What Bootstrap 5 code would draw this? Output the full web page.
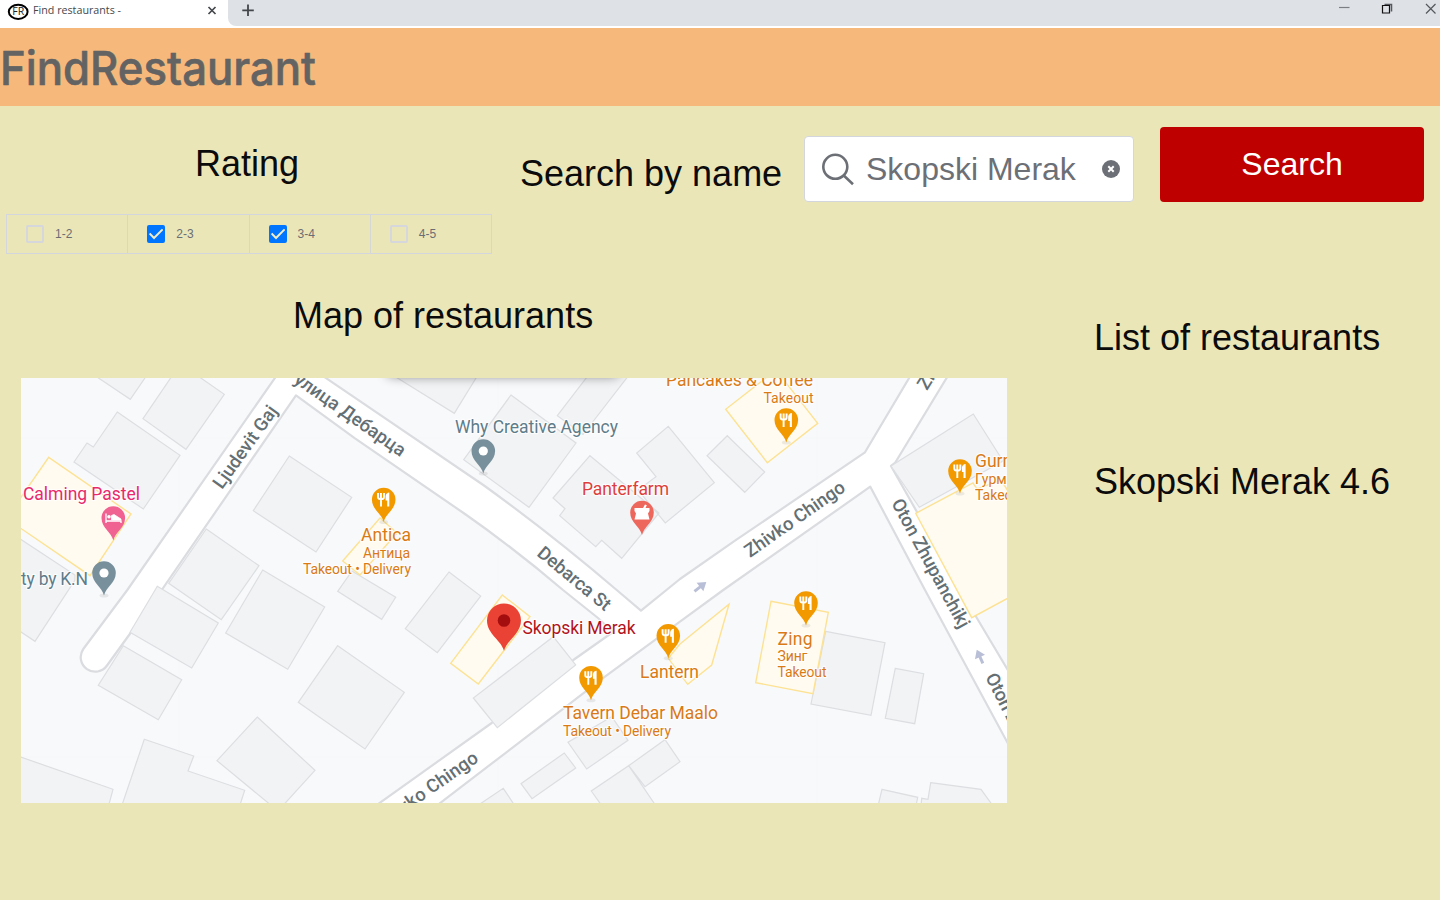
<!DOCTYPE html>
<html lang="en">
<head>
<meta charset="utf-8">
<meta name="viewport" content="width=device-width, initial-scale=1">
<title>Find restaurants</title>
<link href="https://cdn.jsdelivr.net/npm/bootstrap@5.3.0/dist/css/bootstrap.min.css" rel="stylesheet">
<style>
  body { background: #ebe6b8; font-family: "Liberation Sans", Arial, sans-serif; color: #0b0b0b; height: 900px; overflow: hidden; }
  header svg { overflow: visible; }
  .tabstrip { height: 28px; background: #fff; }
  .tab-open { width: 228px; height: 26px; padding-left: 7px; }
  .tab-rest { height: 26px; background: #dee1e6; border-bottom-left-radius: 8px; }
  .brandbar { height: 78px; background: #f7b97b; }
  .heading { font-size: 36px; line-height: 36px; font-weight: 400; margin: 0; white-space: nowrap; }
  .filters { height: 192px; }
  .rating-col { width: 520px; padding-left: 6px; }
  .rating-title { padding: 40px 0 0 189px; }
  .rating-group { width: 486px; height: 40px; border: 1px solid #d3d6dc; margin-top: 32px; }
  .rating-group label { border-right: 1px solid #d5d7d2; padding-left: 19px; font-size: 12px; letter-spacing: .1px; color: #6a6e74; }
  .rating-group label:last-child { border-right: 0; }
  .rating-group .form-check-input { width: 18px; height: 18px; margin: 0 11px 0 0; border: 2px solid #d5d7dd; border-radius: 2px; background-color: transparent; }
  .rating-group .form-check-input:checked { border-color: #0075ff; background-color: #0075ff; background-size: 18px 18px; background-position: center;
    background-image: url("data:image/svg+xml,%3csvg xmlns='http://www.w3.org/2000/svg' viewBox='0 0 18 18'%3e%3cpath d='M2.6 8.5 L7 13 L15.6 4.4' fill='none' stroke='%23f1ecc8' stroke-width='2'/%3e%3c/svg%3e"); }
  .search-label { width: 284px; margin-top: 50px; }
  .search-box { width: 330px; height: 66px; margin-top: 30px; background: #fff; border: 1px solid #d3d6dc; border-radius: 4px; padding: 0 13px 0 16px; }
  .search-box .form-control { font-size: 32px; line-height: 40px; color: #6c7076; padding: 0; border: 0; background: none; margin-left: 11px; border-radius: 0; }
  .btn-find { width: 264px; height: 75px; margin: 21px 0 0 26px; font-size: 32px; color: #fff; background: #bf0000; border: 0; border-radius: 4px; padding: 0 0 2px; }
  .map-col { width: 1007px; padding-left: 21px; }
  .map-title { padding-left: 272px; margin-bottom: 44px; }
  .list-col { padding-left: 87px; padding-top: 22px; }
  .list-col .heading + .heading { margin-top: 108px; }
  .citymap text { font-family: Roboto, sans-serif; paint-order: stroke; stroke: #fff; stroke-width: 2.4px; stroke-opacity: .75; stroke-linejoin: round; }
  .citymap .nm { font-size: 17.5px; }
  .citymap .sub { font-size: 14px; }
  .citymap .st { font-size: 18.5px; fill: #646f74; font-weight: 500; }
  .citymap .food { fill: #d97a16; }
</style>
</head>
<body>
<header>
  <div class="tabstrip d-flex">
    <div class="tab-open d-flex">
      <svg width="22" height="22" viewBox="0 0 22 22"><ellipse cx="11.2" cy="11.8" rx="9.4" ry="7.1" fill="#fff" stroke="#000" stroke-width="2"/><text x="5.2" y="15.300" font-size="10" fill="#222" textLength="12" lengthAdjust="spacingAndGlyphs" font-family="Open Sans, sans-serif">FR</text></svg>
      <svg width="92" height="22"><text x="4" y="13.8" font-size="11" fill="#45484c" textLength="88" lengthAdjust="spacingAndGlyphs" font-family="Open Sans, sans-serif">Find restaurants -</text></svg>
      <svg class="ms-auto me-2" width="16" height="22" viewBox="0 0 16 22"><path d="M4.500 7l7 7M11.500 7l-7 7" stroke="#45484c" stroke-width="1.700"/></svg>
    </div>
    <div class="tab-rest flex-grow-1 d-flex justify-content-between">
      <svg width="40" height="22"><path d="M20 4.500v11.500M14.300 10.300h11.500" stroke="#43464a" stroke-width="1.800"/></svg>
      <svg width="110" height="22" fill="none"><path d="M9 7.500h10.500" stroke="#7b7e82" stroke-width="1.200"/><path d="M54.500 4.500h7v7" stroke="#55585c" stroke-width="1.500"/><path d="M52.500 5.500h7v7.500h-7z" stroke="#111" stroke-width="1.200"/><path d="M96 4l9.500 9.500M105.500 4l-9.500 9.500" stroke="#55585c" stroke-width="1.200"/></svg>
    </div>
  </div>
  <div class="brandbar">
    <svg class="d-block" width="330" height="78"><text x="0" y="57" font-family="Inter, sans-serif" font-weight="500" font-size="46.500" fill="#636363" stroke="#636363" stroke-width=".6" textLength="316" lengthAdjust="spacingAndGlyphs">FindRestaurant</text></svg>
  </div>
</header>
<main>
  <div class="filters d-flex align-items-start">
    <div class="rating-col">
      <h2 class="heading rating-title">Rating</h2>
      <div class="rating-group d-flex">
        <label class="d-flex align-items-center flex-fill"><input class="form-check-input" type="checkbox">1-2</label>
        <label class="d-flex align-items-center flex-fill"><input class="form-check-input" type="checkbox" checked>2-3</label>
        <label class="d-flex align-items-center flex-fill"><input class="form-check-input" type="checkbox" checked>3-4</label>
        <label class="d-flex align-items-center flex-fill"><input class="form-check-input" type="checkbox">4-5</label>
      </div>
    </div>
    <h2 class="heading search-label">Search by name</h2>
    <div class="search-box d-flex align-items-center">
      <svg class="flex-shrink-0" width="34" height="34" fill="none" stroke="#6c7076" stroke-width="2.600"><circle cx="14.300" cy="14.800" r="12"/><path d="M22.500 23.300l9.500 9"/></svg>
      <input class="form-control shadow-none" type="text" value="Skopski Merak" aria-label="Restaurant name">
      <svg class="flex-shrink-0" width="18" height="18"><circle cx="9" cy="9" r="9" fill="#6c7076"/><path d="M6.300 6.300l5.400 5.400M11.700 6.300l-5.400 5.400" stroke="#fff" stroke-width="2"/></svg>
    </div>
    <button class="btn btn-find" type="button">Search</button>
  </div>
  <div class="d-flex align-items-start">
    <section class="map-col">
      <h2 class="heading map-title">Map of restaurants</h2>
      <svg class="citymap d-block" width="986" height="425" viewBox="21 378 986 425">
        <defs>
          <path id="drop" d="M0 22.500C-2 14-11.800 10-11.800 0A11.800 11.800 0 1 1 11.800 0C11.800 10 2 14 0 22.500Z"/>
          <g id="place"><ellipse cy="22.500" rx="4.500" ry="2" fill="#000" opacity=".07"/><use href="#drop" fill="#78909c"/><circle r="4.600" fill="#fff"/></g>
          <g id="fork"><ellipse cy="22.500" rx="4.500" ry="2" fill="#000" opacity=".07"/><use href="#drop" fill="#f29900"/><path d="M-5.700-6.500v4q0 2.200 3 2.200t3-2.200v-4M-2.700-6.500v13.500" fill="none" stroke="#fff" stroke-width="1.900"/><path d="M5.600 7h-2.100V1H1.900V-3.500Q2.500-6.800 5.600-7Z" fill="#fff"/></g>
          <filter id="soft" x="-20%" y="-150%" width="140%" height="400%"><feGaussianBlur stdDeviation="6"/></filter>
        </defs>
        <rect x="21" y="378" width="986" height="425" fill="#f8f9fb"/>
        <path d="M21 438H1007M21 757H1007M179 378V803M498 378V803M817 378V803" stroke="#f6f7f8"/>
        <path fill="#fff" stroke="#dadce0" stroke-width="2.200" stroke-linejoin="round" d="M277 375L127.300 590L83.300 649A13.500 13.500 0 0 0 107 665.500L161.700 590L296 395.300L355 438.300L465 514Q515 549 563 590L598 618L613 632L573.300 660L491.700 723L374 807H435L605 676.700L680 621.700L723.300 590L870.300 486.700L925 590L1012 751V677L976.700 617.700L891 466L895 463L949 374H911.500L865 452.300L735 540.700L680 579L641 610.700L616.700 590Q550 533 483.300 485L350 394.300L320 374Z"/>
        <g fill="#f1f3f4" stroke="#dcdee1" stroke-width="1.200">
          <path d="M94 375L130.300 399.300L147 375ZM172 376L143 418.700L186 449.300L224.300 394.300L198 376ZM117.300 412L180 455.300L143.300 509L74 462L87 443L93.300 447ZM15 535.500L75 575V580L35 641.300L15 628ZM289.300 456L351.700 497.300L316 552L253.300 510.700ZM206.300 529L259 565.700L221.300 619.700L168.700 583.300ZM262.700 570L324.700 607L287.700 669.300L225.700 633ZM157.300 586.300L218.300 623L191.700 668L130 632.300ZM123.300 645.700L181.700 679.700L158.300 719.700L98.300 685.300ZM337.700 645.700L404.300 692.300L365 749L298.300 702.300ZM257.300 717L315 770.300L278 811L217 760.700ZM15 755L113 789.300L108 808H15ZM144.300 739.300L193.700 756L188 771L244.700 790.300L239 808H121Z"/>
          <path d="M395.700 597.300L381.700 619.300L337.700 591.300L352 571ZM449 572L480.700 596L437.300 652.700L405.300 628.700ZM553.300 636.700L575.700 665L497.300 727.700L473.300 698ZM564.300 753L575.700 768L532 798.700L521 783.700ZM611.700 716.700L628 740.300L586.700 769L568 742.300ZM665 739.700L680 761.700L645 786.700L628.700 765.700ZM628.700 765.700L656 806H602L591.300 791ZM503.300 788.300L515 806H477ZM391 374L454.300 413.300L478.500 374ZM511 395L576 443L529 507.300L463.700 459.700ZM588.500 375L557.300 415.700L583 434.500L629 375ZM668.300 426.300L714.300 482.700L665.300 523L638 490L656 476.700L636.700 453ZM590 455.700L659 513L621.700 558.300L601.700 540.300L595.700 546.700L559.700 515.700L565 508.700L553 498ZM727.300 435.700L764.700 472L744.700 492.300L707 455.700ZM973.300 414L1003 461L919.300 507.300L891 466Z"/>
          <path d="M825.700 631.300L885 642.700L871 715.300L811 704ZM895.300 668.300L923.700 673.700L914.700 723.700L885.300 718.300ZM882 789.300L917.700 797.300L916 806H878ZM930.700 782.700L981 789.300L993 806H921L921.700 798.300L928 799.300Z"/>
        </g>
        <g fill="#fffbf0" stroke="#fde293" stroke-width="1.400">
          <path d="M48.700 457.300L131 514L90 575.700L10 521V513ZM502.300 595L530 616.700L478.300 684L450.700 663.300ZM725.700 409.300L767.300 462.700L817.700 423.300L776 370ZM915.700 513.300L973 483L977 489L1001 480L1010 494V597L971.700 617.700ZM771 601.300L828.300 612.300L813 693.700L755.700 682.700ZM729 604.300L711.700 665L687.700 684.300L668.300 658.300L680 644ZM380 518L397 533L360 575L342.700 561Z"/>
        </g>
        <rect x="386" y="362" width="234" height="14" rx="7" fill="#000" opacity=".5" filter="url(#soft)"/>
        <g fill="#b9bfd6" stroke="#b9bfd6">
          <g transform="translate(700 587) rotate(52)"><path d="M0-8L5.500 0H-5.500Z" stroke="none"/><path d="M0-1V7" stroke-width="3"/></g>
          <g transform="translate(980 657) rotate(-24)"><path d="M0-8L5.500 0H-5.500Z" stroke="none"/><path d="M0-1V7" stroke-width="3"/></g>
        </g>
        <text class="st" transform="translate(222 490) rotate(-54.500)" textLength="97">Ljudevit Gaj</text>
        <text class="st" transform="translate(293 382) rotate(35)" textLength="131">улица Дебарца</text>
        <text class="st" transform="translate(536 555) rotate(39.500)" textLength="89">Debarca St</text>
        <text class="st" transform="translate(750 558) rotate(-35)" textLength="118">Zhivko Chingo</text>
        <text class="st" transform="translate(382 829) rotate(-35)" textLength="119">Zhivko Chingo</text>
        <text class="st" transform="translate(927 391) rotate(-58)">Zhivko</text>
        <text class="st" transform="translate(891 503) rotate(61.500)" textLength="144">Oton Zhupanchikj</text>
        <text class="st" transform="translate(985 677) rotate(63)" textLength="144">Oton Zhupanchikj</text>
        <use href="#place" x="483.300" y="451"/><use href="#place" x="104" y="573"/>
        <use href="#fork" x="383.700" y="499.500"/><use href="#fork" x="786.300" y="420"/><use href="#fork" x="960" y="471"/><use href="#fork" x="668.300" y="635.800"/><use href="#fork" x="591" y="677.700"/><use href="#fork" x="806" y="603"/>
        <use href="#drop" x="113.300" y="518" fill="#f06292"/>
        <path d="M106 513.500V523M106 521H121V523" fill="none" stroke="#fff" stroke-width="1.300"/><path d="M111.500 520V515.500L114 514.500L121 519V520Z" fill="#fff" stroke="#fff" stroke-width=".8"/><circle cx="109" cy="516.800" r="1.800" fill="#fff"/>
        <use href="#drop" x="642" y="512.500" fill="#ee675c"/>
        <path d="M634.500 508H643L645 504.500L646.800 505.300L645.500 508H649.500V511L648 513.500L649.500 519.500H634.500L636 513.500L634.500 511Z" fill="#fff"/>
        <path d="M504 650.700C501 640 487 634 487 620.500A17 17 0 1 1 521 620.500C521 634 507 640 504 650.700Z" fill="#ea4335"/><circle cx="504" cy="620.500" r="6.300" fill="#a50e0e"/>
        <text class="nm" x="455" y="433" textLength="163" fill="#5f7c8a">Why Creative Agency</text>
        <text class="nm" x="21" y="585" textLength="67" fill="#5f7c8a">ty by K.N</text>
        <text class="nm" x="23" y="500" textLength="117" fill="#e8296c">Calming Pastel</text>
        <text class="nm" x="582" y="495" textLength="87" fill="#de3f3b">Panterfarm</text>
        <text class="nm" x="522.500" y="634" textLength="113" fill="#b3131b">Skopski Merak</text>
        <g class="food">
          <text class="nm" x="361" y="541" textLength="50">Antica</text><text class="sub" x="363" y="558" textLength="47">Антица</text><text class="sub" x="303" y="574" textLength="108">Takeout • Delivery</text>
          <text class="nm" x="666" y="386" textLength="147">Pancakes &amp; Coffee</text><text class="sub" x="763.500" y="402.500" textLength="50">Takeout</text>
          <text class="nm" x="975" y="467">Gurman</text><text class="sub" x="975" y="484">Гурман</text><text class="sub" x="975" y="500">Takeout</text>
          <text class="nm" x="777.500" y="645" textLength="35">Zing</text><text class="sub" x="777.500" y="661" textLength="30">Зинг</text><text class="sub" x="777.500" y="677" textLength="49">Takeout</text>
          <text class="nm" x="640" y="678" textLength="59">Lantern</text>
          <text class="nm" x="563" y="719" textLength="155">Tavern Debar Maalo</text><text class="sub" x="563" y="736" textLength="108">Takeout • Delivery</text>
        </g>
      </svg>
    </section>
    <section class="list-col">
      <h2 class="heading">List of restaurants</h2>
      <p class="heading">Skopski Merak 4.6</p>
    </section>
  </div>
</main>
<script src="https://cdn.jsdelivr.net/npm/bootstrap@5.3.0/dist/js/bootstrap.bundle.min.js"></script>
</body>
</html>
